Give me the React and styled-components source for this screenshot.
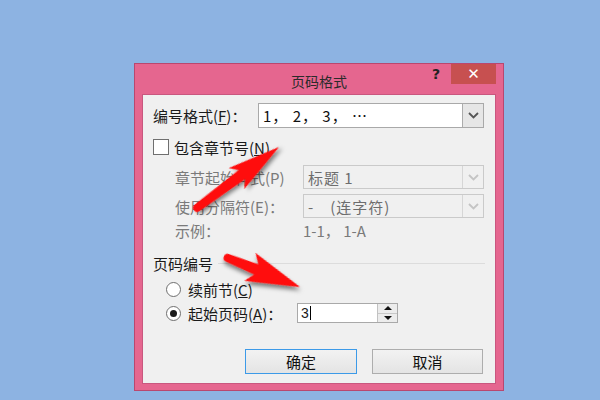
import React from "react";
import styled, { createGlobalStyle } from "styled-components";

const Global = createGlobalStyle`
  html, body { margin: 0; padding: 0; }
  body {
    background: #8db3e2;
    font-family: "Noto Sans CJK SC", "Noto Sans", sans-serif;
  }
`;

const Desktop = styled.div`
  position: relative;
  width: 600px;
  height: 400px;
  overflow: hidden;
  background: #8db3e2;
  padding: 63px 0 0 134px;
  box-sizing: border-box;
`;

const Window = styled.div`
  width: 370px;
  height: 328px;
  box-sizing: border-box;
  background: #e5668f;
  border: 1px solid #b9476f;
  display: flex;
  flex-direction: column;
  padding: 0 7px 6px 7px;
`;

const TitleBar = styled.div`
  height: 30px;
  position: relative;
  display: flex;
  align-items: center;
  justify-content: center;
  flex-shrink: 0;
`;

const Title = styled.div`
  font-size: 14px;
  color: #2b2b2b;
  padding-top: 4px;
`;

const Help = styled.div`
  position: absolute;
  right: 56px;
  top: 2px;
  font-family: "DejaVu Sans", sans-serif;
  font-weight: bold;
  font-size: 14px;
  color: #222;
`;

const Close = styled.div`
  position: absolute;
  right: 0;
  top: 0;
  width: 45px;
  height: 20px;
  background: #c75050;
  color: #fff;
  display: flex;
  align-items: center;
  justify-content: center;
  font-family: "DejaVu Sans", sans-serif;
  font-size: 15px;
  font-weight: bold;
`;

const Panel = styled.div`
  flex: 1;
  background: #f0f0f0;
  border: 1px solid #c9577f;
  padding: 8px 10px 0 10px;
  font-size: 15px;
  color: #1a1a1a;
`;

const Row = styled.div`
  display: flex;
  align-items: center;
  height: ${(p) => p.h || 20}px;
  margin-top: ${(p) => p.mt || 0}px;
  padding-left: ${(p) => p.indent || 0}px;
  color: ${(p) => (p.disabled ? "#7a7a7a" : "inherit")};
  white-space: nowrap;
`;

const Label = styled.div`
  width: ${(p) => p.w}px;
  flex-shrink: 0;
  u { text-decoration: underline; text-underline-offset: 2px; }
`;

const Select = styled.div`
  width: ${(p) => p.w}px;
  height: ${(p) => p.h}px;
  box-sizing: border-box;
  border: 1px solid ${(p) => (p.disabled ? "#cacaca" : "#a9a9a9")};
  background: ${(p) => (p.disabled ? "#f0f0f0" : "#fff")};
  display: flex;
  align-items: stretch;
  color: ${(p) => (p.disabled ? "#6d6d6d" : "#111")};
`;

const SelectText = styled.div`
  flex: 1;
  display: flex;
  align-items: center;
  padding-left: 4px;
  letter-spacing: 1px;
`;

const DropBtn = styled.div`
  width: 20px;
  border-left: 1px solid ${(p) => (p.disabled ? "#d6d6d6" : "#acacac")};
  background: ${(p) => (p.disabled ? "#f0f0f0" : "#e6e6e6")};
  display: flex;
  align-items: center;
  justify-content: center;
`;

const Chevron = ({ color }) => (
  <svg width="11" height="7" viewBox="0 0 11 7">
    <path d="M1 1 L5.5 5.5 L10 1" fill="none" stroke={color} strokeWidth="1.8" />
  </svg>
);

const Check = styled.div`
  width: 16px;
  height: 16px;
  box-sizing: border-box;
  border: 1px solid #6f6f6f;
  background: #fff;
  margin-right: 5px;
`;

const Group = styled.div`
  display: flex;
  align-items: center;
  height: 20px;
  margin-top: ${(p) => p.mt}px;
`;

const Rule = styled.div`
  flex: 1;
  height: 1px;
  background: #dcdcdc;
  margin-left: 5px;
`;

const Radio = styled.div`
  width: 15px;
  height: 15px;
  box-sizing: border-box;
  border: 1px solid #6f6f6f;
  border-radius: 50%;
  background: #fff;
  margin-right: 7px;
  display: flex;
  align-items: center;
  justify-content: center;
  &::after {
    content: "";
    width: 7px;
    height: 7px;
    border-radius: 50%;
    background: ${(p) => (p.checked ? "#1b1b1b" : "transparent")};
  }
`;

const Spin = styled.div`
  width: 101px;
  height: 20px;
  box-sizing: border-box;
  border: 1px solid #a9a9a9;
  background: #fff;
  display: flex;
`;

const SpinText = styled.div`
  flex: 1;
  display: flex;
  align-items: center;
  padding-left: 3px;
  font-family: "Liberation Sans", sans-serif;
  font-size: 14px;
  &::after {
    content: "";
    width: 1px;
    height: 14px;
    background: #000;
    margin-left: 1px;
  }
`;

const SpinBtns = styled.div`
  width: 19px;
  display: flex;
  flex-direction: column;
  border-left: 1px solid #c2c2c2;
`;

const SpinBtn = styled.div`
  flex: 1;
  display: flex;
  align-items: center;
  justify-content: center;
  background: #ececec;
  border-bottom: ${(p) => (p.top ? "1px solid #c8c8c8" : "none")};
  &::after {
    content: "";
    border-left: 4px solid transparent;
    border-right: 4px solid transparent;
    ${(p) =>
      p.top ? "border-bottom: 4px solid #111;" : "border-top: 4px solid #111;"}
  }
`;

const Buttons = styled.div`
  display: flex;
  gap: 15px;
  margin-top: 25px;
  padding-left: 92px;
`;

const Button = styled.div`
  width: ${(p) => p.w}px;
  height: 25px;
  box-sizing: border-box;
  border: 1px solid ${(p) => (p.primary ? "#3c9ae8" : "#adadad")};
  background: linear-gradient(#f2f2f2, #e4e4e4);
  display: flex;
  align-items: center;
  justify-content: center;
  font-size: 15px;
  color: #111;
`;

const Overlay = styled.svg`
  position: absolute;
  left: 0;
  top: 0;
  pointer-events: none;
`;

const arrow = (L, H, W) =>
  `M0,0 L${-H},${-W} L${-H + 7},-5.5 L${-L},-4 A4,4 0 0 0 ${-L},4 L${-H + 7},5.5 L${-H},${W} Z`;

export default function App() {
  return (
    <Desktop>
      <Global />
      <Window>
        <TitleBar>
          <Title>页码格式</Title>
          <Help>?</Help>
          <Close>✕</Close>
        </TitleBar>
        <Panel>
          <Row h={25}>
            <Label w={105}>
              编号格式(<u>F</u>)：
            </Label>
            <Select w={226} h={25}>
              <SelectText>1， 2， 3， …</SelectText>
              <DropBtn>
                <Chevron color="#555" />
              </DropBtn>
            </Select>
          </Row>
          <Row h={16} mt={11}>
            <Check />
            包含章节号(<u>N</u>)
          </Row>
          <Row h={24} mt={10} indent={22} disabled>
            <Label w={128}>章节起始样式(P)</Label>
            <Select w={181} h={24} disabled>
              <SelectText>标题 1</SelectText>
              <DropBtn disabled>
                <Chevron color="#c4c4c4" />
              </DropBtn>
            </Select>
          </Row>
          <Row h={24} mt={5} indent={22} disabled>
            <Label w={128}>使用分隔符(E)：</Label>
            <Select w={181} h={24} disabled>
              <SelectText>-　(连字符)</SelectText>
              <DropBtn disabled>
                <Chevron color="#c4c4c4" />
              </DropBtn>
            </Select>
          </Row>
          <Row h={20} mt={2} indent={22} disabled>
            <Label w={128}>示例：</Label>
            <span>1-1， 1-A</span>
          </Row>
          <Group mt={13}>
            页码编号
            <Rule />
          </Group>
          <Row h={20} mt={6} indent={13}>
            <Radio />
            续前节(<u>C</u>)
          </Row>
          <Row h={22} mt={3} indent={13}>
            <Radio checked />
            <Label w={109}>
              起始页码(<u>A</u>)：
            </Label>
            <Spin>
              <SpinText>3</SpinText>
              <SpinBtns>
                <SpinBtn top />
                <SpinBtn />
              </SpinBtns>
            </Spin>
          </Row>
          <Buttons>
            <Button w={112} primary>确定</Button>
            <Button w={111}>取消</Button>
          </Buttons>
        </Panel>
      </Window>
      <Overlay width="600" height="400" viewBox="0 0 600 400">
        <defs>
          <filter id="sh" x="-30%" y="-30%" width="160%" height="160%">
            <feDropShadow dx="2" dy="3" stdDeviation="2" floodColor="#000" floodOpacity="0.5" />
          </filter>
        </defs>
        <path
          d={arrow(102, 53, 13)}
          fill="#ff0a0a"
          filter="url(#sh)"
          transform="translate(279 147) rotate(-36.6)"
        />
        <path
          d={arrow(78, 54, 15)}
          fill="#ff0a0a"
          filter="url(#sh)"
          transform="translate(300 287) rotate(21.9)"
        />
      </Overlay>
    </Desktop>
  );
}
